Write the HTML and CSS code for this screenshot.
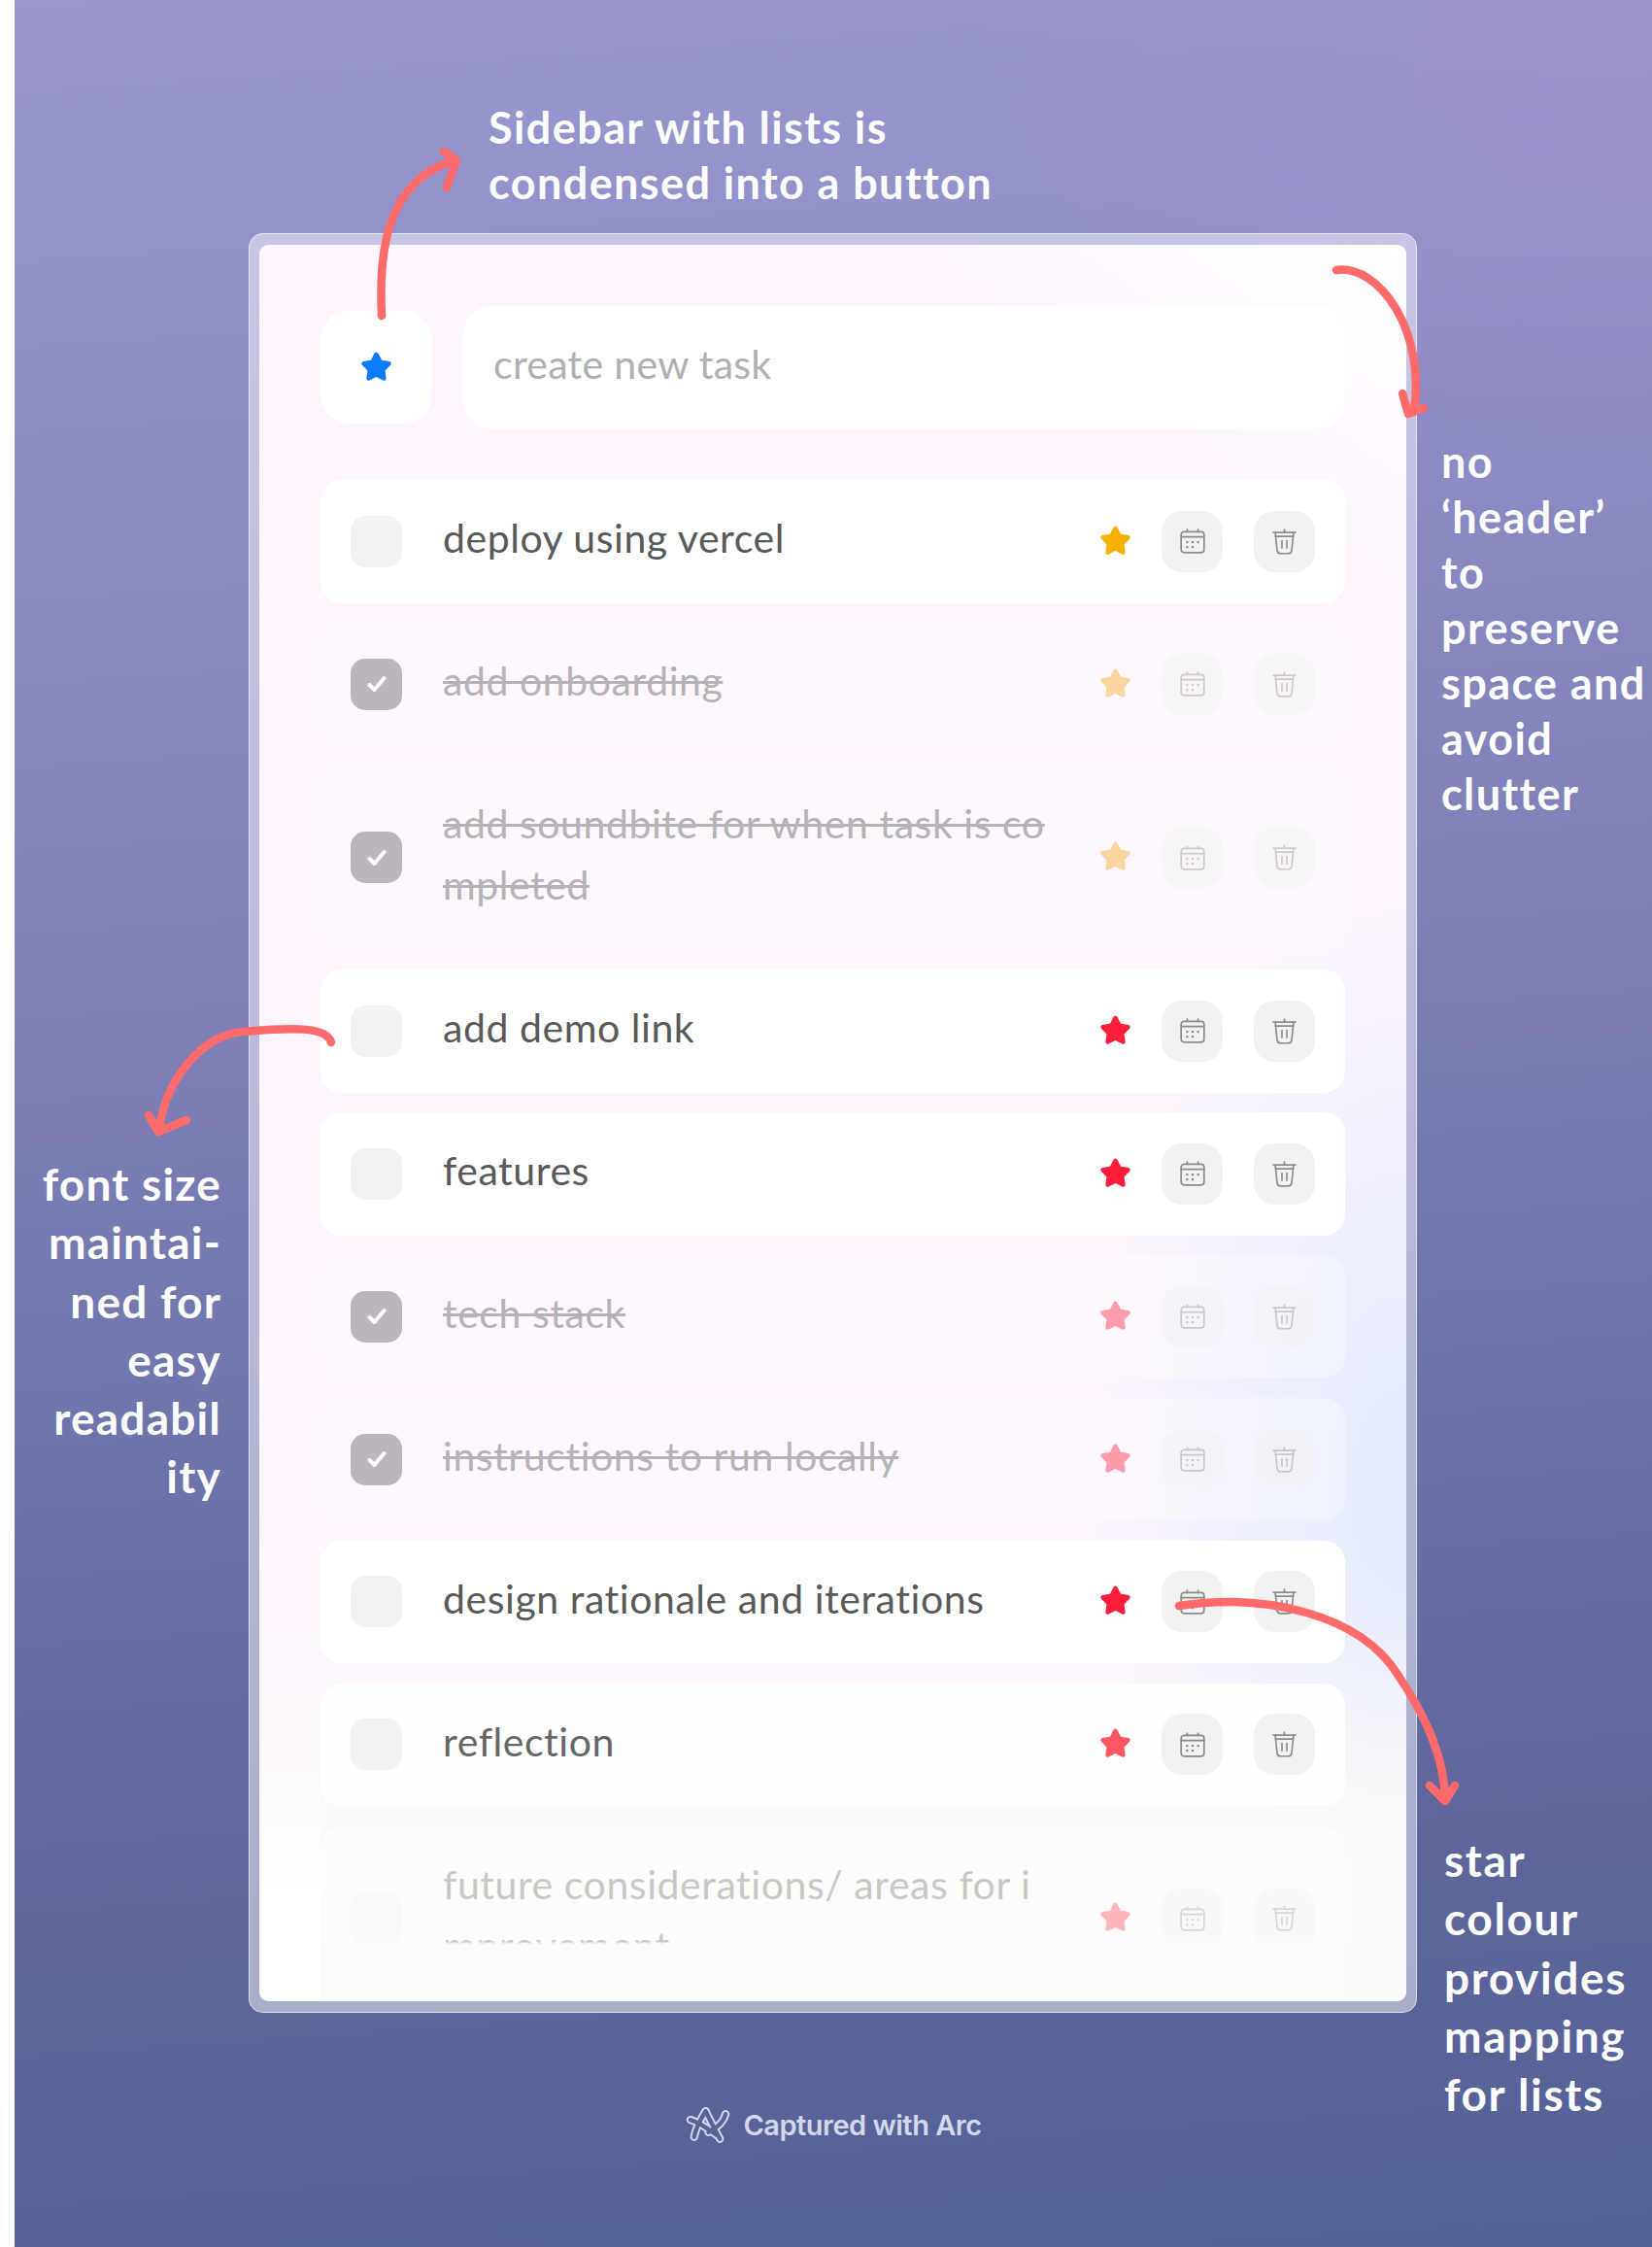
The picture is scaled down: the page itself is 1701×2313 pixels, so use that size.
FILE: index.html
```html
<!DOCTYPE html>
<html lang="en">
  <head>
    <meta charset="UTF-8" />
    <title>Captured with Arc</title>
    <link rel="stylesheet" href="styles.css">
  </head>
  <body>
    <svg class="sprite" width="0" height="0">
      <symbol id="star" viewBox="0 0 32 32">
        <polygon points="16,3.5 19.8,10.7 27.9,12.1 22.2,18 23.3,26.1 16,22.5 8.7,26.1 9.8,18 4.1,12.1 12.2,10.7" fill="currentColor" stroke="currentColor" stroke-width="4" stroke-linejoin="round"/>
      </symbol>
      <symbol id="cal" viewBox="0 0 26 26">
        <g fill="none" stroke="currentColor" stroke-width="1.7" stroke-linecap="round">
          <rect x="1.2" y="3.4" width="23.6" height="21.4" rx="3"/>
          <path d="M1.2 8.6H24.8M7.4 1V3.4M18.6 1V3.4"/>
        </g>
        <g fill="currentColor">
          <rect x="6.2" y="13" width="2.2" height="2.2"/>
          <rect x="11.9" y="13" width="2.2" height="2.2"/>
          <rect x="17.6" y="13" width="2.2" height="2.2"/>
          <rect x="6.2" y="18" width="2.2" height="2.2"/>
          <rect x="11.9" y="18" width="2.2" height="2.2"/>
        </g>
      </symbol>
      <symbol id="trash" viewBox="0 0 26 28">
        <g fill="none" stroke="currentColor" stroke-width="1.7" stroke-linecap="round" stroke-linejoin="round">
          <path d="M1 4.2H25M13 1V4.2"/>
          <path d="M3.2 4.2L5.2 23.5Q5.6 26.8 9 26.8H17Q20.4 26.8 20.8 23.5L22.8 4.2"/>
          <path d="M3.4 8.4H22.6"/>
          <path d="M10.4 13V21M15.6 13V21"/>
        </g>
      </symbol>
      <symbol id="check" viewBox="0 0 20 18">
        <path d="M2.5 10L7.5 15L17.5 3" fill="none" stroke="currentColor" stroke-width="4" stroke-linejoin="round" stroke-linecap="round"/>
      </symbol>
    </svg>

    <div class="page">
      <div class="frame">
        <div class="card">
          <div class="top">
            <button class="lists"><svg class="star star-blue"><use href="#star"/></svg></button>
            <div class="new-task">create new task</div>
          </div>

          <div class="rows">
            <div class="row">
              <span class="box"></span>
              <p class="task">deploy using vercel</p>
              <svg class="star star-gold"><use href="#star"/></svg>
              <span class="btn"><svg class="i-cal"><use href="#cal"/></svg></span>
              <span class="btn"><svg class="i-trash"><use href="#trash"/></svg></span>
            </div>
            <div class="row done">
              <span class="box"><svg class="i-check"><use href="#check"/></svg></span>
              <p class="task">add onboarding</p>
              <svg class="star star-gold"><use href="#star"/></svg>
              <span class="btn"><svg class="i-cal"><use href="#cal"/></svg></span>
              <span class="btn"><svg class="i-trash"><use href="#trash"/></svg></span>
            </div>
            <div class="row done tall">
              <span class="box"><svg class="i-check"><use href="#check"/></svg></span>
              <p class="task">add soundbite for when task is co<br>mpleted</p>
              <svg class="star star-gold"><use href="#star"/></svg>
              <span class="btn"><svg class="i-cal"><use href="#cal"/></svg></span>
              <span class="btn"><svg class="i-trash"><use href="#trash"/></svg></span>
            </div>
            <div class="row">
              <span class="box"></span>
              <p class="task">add demo link</p>
              <svg class="star star-red"><use href="#star"/></svg>
              <span class="btn"><svg class="i-cal"><use href="#cal"/></svg></span>
              <span class="btn"><svg class="i-trash"><use href="#trash"/></svg></span>
            </div>
            <div class="row">
              <span class="box"></span>
              <p class="task">features</p>
              <svg class="star star-red"><use href="#star"/></svg>
              <span class="btn"><svg class="i-cal"><use href="#cal"/></svg></span>
              <span class="btn"><svg class="i-trash"><use href="#trash"/></svg></span>
            </div>
            <div class="row done">
              <span class="box"><svg class="i-check"><use href="#check"/></svg></span>
              <p class="task">tech stack</p>
              <svg class="star star-red"><use href="#star"/></svg>
              <span class="btn"><svg class="i-cal"><use href="#cal"/></svg></span>
              <span class="btn"><svg class="i-trash"><use href="#trash"/></svg></span>
            </div>
            <div class="row done">
              <span class="box"><svg class="i-check"><use href="#check"/></svg></span>
              <p class="task">instructions to run locally</p>
              <svg class="star star-red"><use href="#star"/></svg>
              <span class="btn"><svg class="i-cal"><use href="#cal"/></svg></span>
              <span class="btn"><svg class="i-trash"><use href="#trash"/></svg></span>
            </div>
            <div class="row">
              <span class="box"></span>
              <p class="task">design rationale and iterations</p>
              <svg class="star star-red"><use href="#star"/></svg>
              <span class="btn"><svg class="i-cal"><use href="#cal"/></svg></span>
              <span class="btn"><svg class="i-trash"><use href="#trash"/></svg></span>
            </div>
            <div class="row soft">
              <span class="box"></span>
              <p class="task">reflection</p>
              <svg class="star star-red"><use href="#star"/></svg>
              <span class="btn"><svg class="i-cal"><use href="#cal"/></svg></span>
              <span class="btn"><svg class="i-trash"><use href="#trash"/></svg></span>
            </div>
            <div class="row tall last">
              <span class="box"></span>
              <p class="task">future considerations/ areas for i<br>mprovement</p>
              <svg class="star star-red"><use href="#star"/></svg>
              <span class="btn"><svg class="i-cal"><use href="#cal"/></svg></span>
              <span class="btn"><svg class="i-trash"><use href="#trash"/></svg></span>
              <div class="fade"></div>
            </div>
          </div>
        </div>
      </div>

      <div class="captured">
        <svg class="arc" viewBox="0 0 50 40">
          <g fill="none" stroke-linecap="round" stroke-linejoin="round">
            <g class="arc-outer">
              <path d="M11 33C12 26 18 14 23 6"/>
              <path d="M7 15C14 17 28 26 36 32"/>
              <path d="M23 6C27 14 33 26 38 35"/>
              <path d="M44 9C42 17 34 24 26 28"/>
            </g>
            <g class="arc-inner">
              <path d="M11 33C12 26 18 14 23 6"/>
              <path d="M7 15C14 17 28 26 36 32"/>
              <path d="M23 6C27 14 33 26 38 35"/>
              <path d="M44 9C42 17 34 24 26 28"/>
            </g>
          </g>
        </svg>
        <span>Captured with Arc</span>
      </div>

      <p class="note note-sidebar">Sidebar with lists is<br>condensed into a button</p>
      <p class="note note-header">no<br>‘header’<br>to<br>preserve<br>space and<br>avoid<br>clutter</p>
      <p class="note note-font">font size<br>maintai-<br>ned for<br>easy<br>readabil<br>ity</p>
      <p class="note note-star">star<br>colour<br>provides<br>mapping<br>for lists</p>

      <!-- hand drawn arrows, page coordinates -->
      <svg class="arrows" viewBox="0 0 1701 2313">
        <g fill="none" stroke="#ff6b6b" stroke-width="8.5" stroke-linecap="round" stroke-linejoin="round">
          <path d="M393 325C390 262 396 188 467 165"/>
          <path d="M457 156L470 165L460 193"/>
          <path d="M1376 278C1420 272 1468 340 1456 423"/>
          <path d="M1444 405L1450 426L1466 420"/>
          <path d="M341 1073C336 1056 300 1058 250 1062C205 1066 170 1115 164 1162"/>
          <path d="M153 1148L163 1165L192 1153"/>
          <path d="M1214 1653C1300 1640 1400 1660 1440 1725C1470 1770 1487 1810 1488 1852"/>
          <path d="M1472 1838L1488 1854L1498 1838"/>
        </g>
      </svg>
    </div>
  </body>
</html>
```

FILE: styles.css
```css
* {
  box-sizing: border-box;
}
html,
body {
  margin: 0;
  background: #fff;
}
body {
  height: 2313px;
  overflow: hidden;
  font-family: Lato, sans-serif;
}
.sprite {
  position: absolute;
}
p {
  margin: 0;
}

.page {
  position: relative;
  margin-left: 15px;
  height: 2313px;
  padding: 240px 0 0 241px;
  background:
    radial-gradient(ellipse 700px 500px at 100% 60px, rgba(168, 148, 212, 0.4), rgba(168, 148, 212, 0)),
    linear-gradient(176deg, #9b98d0 0%, #8c8bc4 22%, #8080b8 42%, #6e74ab 62%, #5f659b 82%, #536197 100%);
}

/* window */
.frame {
  width: 1203px;
  height: 1832px;
  padding: 11px 10px 11px 10px;
  border-radius: 15px;
  border: 1px solid rgba(255, 255, 255, 0.55);
  background: rgba(255, 255, 255, 0.48);
}
.card {
  height: 100%;
  padding: 63px 63px 0 63px;
  border-radius: 9px;
  overflow: hidden;
  background:
    linear-gradient(180deg, rgba(255, 255, 255, 0), #fff 60%) left bottom / 63px 260px no-repeat,
    linear-gradient(180deg, rgba(251, 250, 248, 0) 78%, #fbfaf8 92%),
    radial-gradient(ellipse 330px 620px at 100% 71%, #e4ecfc 0%, rgba(228, 236, 252, 0.6) 45%, rgba(228, 236, 252, 0) 100%),
    linear-gradient(215deg, #fff 0%, rgba(255, 255, 255, 0) 14%),
    #fef5fe;
}

/* top bar */
.top {
  display: flex;
  align-items: center;
  gap: 32px;
  height: 126px;
}
.lists {
  display: flex;
  align-items: center;
  justify-content: center;
  width: 115px;
  height: 116px;
  padding: 0;
  border: 0;
  border-radius: 30px;
  background: #fff;
}
.new-task {
  flex: 1;
  height: 126px;
  padding-left: 31px;
  border-radius: 30px;
  background: #fff;
  color: #b0b0b0;
  font-size: 41px;
  letter-spacing: 0.3px;
  line-height: 120px;
}

/* task rows */
.rows {
  display: flex;
  flex-direction: column;
  gap: 20.4px;
  margin-top: 53px;
}
.row {
  position: relative;
  display: flex;
  align-items: center;
  flex: none;
  height: 126.5px;
  padding: 0 31px;
  border-radius: 22px;
  background: #fff;
}
.row.tall {
  height: 190px;
}
.box {
  display: flex;
  align-items: center;
  justify-content: center;
  flex: none;
  width: 53px;
  height: 53px;
  border-radius: 15px;
  background: #f2f2f2;
}
.task {
  flex: 1;
  margin: -7px 0 0 42px;
  color: #595959;
  font-size: 41px;
  letter-spacing: 0.55px;
  line-height: 63.4px;
  white-space: nowrap;
}
.star {
  flex: none;
  width: 35px;
  height: 35px;
}
.star-blue {
  color: #0a7bff;
}
.star-gold {
  color: #f5b000;
}
.star-red {
  color: #ff1f3a;
}
.btn {
  display: flex;
  align-items: center;
  justify-content: center;
  flex: none;
  width: 63px;
  height: 63px;
  margin-left: 32px;
  border-radius: 21px;
  background: #f2f2f2;
  color: #8a8a8a;
}
.star + .btn {
  margin-left: 30px;
}
.i-cal {
  width: 26px;
  height: 26px;
}
.i-trash {
  width: 25px;
  height: 27px;
}
.i-check {
  width: 20px;
  height: 18px;
  color: #fff;
}

.row.done {
  background: rgba(255, 255, 255, 0.32);
}
.done .box {
  background: #bbb6bd;
}
.done .task {
  color: #b4b2b6;
  text-decoration: line-through;
  text-decoration-thickness: 3px;
}
.done .star,
.done .btn {
  opacity: 0.42;
}
.done .star-gold {
  color: #f5a41d;
}
.row.soft {
  background: rgba(255, 255, 255, 0.85);
}
.soft .star {
  color: #ff5662;
}
.soft .task {
  color: #666;
}
.row.last {
  background: #fdfcfa;
}
.last .box,
.last .task,
.last .star,
.last .btn {
  opacity: 0.32;
}
.fade {
  position: absolute;
  left: 0;
  right: 0;
  bottom: 0;
  height: 72px;
  background: linear-gradient(180deg, rgba(252, 251, 249, 0) 0%, #fcfbf9 5%);
}

/* footer */
.captured {
  display: flex;
  align-items: center;
  justify-content: center;
  gap: 12px;
  width: 1203px;
  margin-top: 95px;
  color: #d5d8ec;
  font-family: Inter, sans-serif;
  font-size: 29px;
  font-weight: 600;
  letter-spacing: -0.5px;
}
.arc {
  width: 49px;
  height: 40px;
}
.arc-outer {
  stroke: #d5d8ec;
  stroke-width: 8.5;
}
.arc-inner {
  stroke: #596296;
  stroke-width: 4.5;
}

/* annotations */
.note {
  position: absolute;
  color: #fff;
  font-size: 45px;
  font-weight: 700;
  line-height: 57px;
  letter-spacing: 1.4px;
}
.note-sidebar {
  left: 488px;
  top: 103px;
}
.note-header {
  left: 1469px;
  top: 447px;
}
.note-font {
  right: 1473px;
  top: 1189px;
  line-height: 60.3px;
  text-align: right;
  font-size: 46px;
  letter-spacing: 1.2px;
}
.note-star {
  left: 1472px;
  top: 1885px;
  line-height: 60.3px;
  font-size: 46px;
  letter-spacing: 1.6px;
}
.arrows {
  position: absolute;
  left: -15px;
  top: 0;
  width: 1701px;
  height: 2313px;
  pointer-events: none;
}
```
